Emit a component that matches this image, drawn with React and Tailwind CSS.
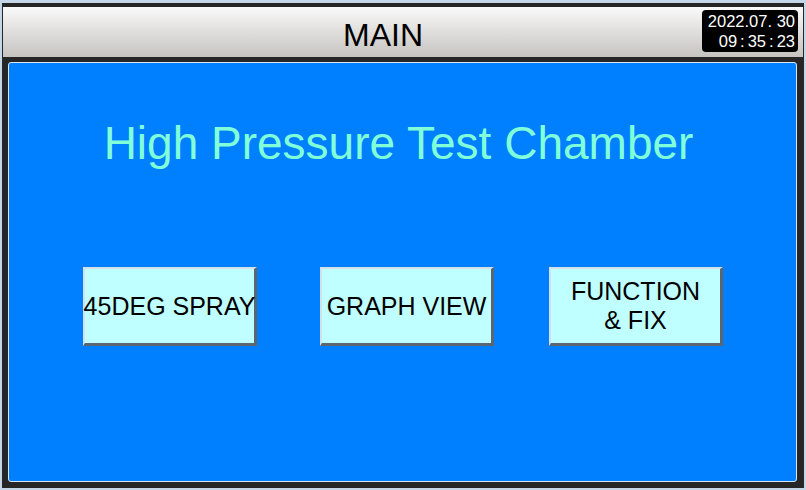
import React from "react"

const btnClass =
  "w-[174px] h-[79px] bg-[#c0ffff] border-t-2 border-l-2 border-b-[3px] border-r-[3px] border-t-[#d6e0e8] border-l-[#d6e0e8] border-b-[#5c6670] border-r-[#5c6670] flex flex-col items-center justify-center text-[25px] leading-[29px] text-black whitespace-nowrap"

export default function App() {
  return (
    <div
      className="w-[806px] h-[490px] bg-[#c5d6e8] pt-[3px] px-[2px] pb-[2px]"
      style={{ fontFamily: '"Liberation Sans", Arial, sans-serif' }}
    >
      <div className="h-full bg-[#262626] flex flex-col pt-[4px] px-[1px]">
        <div className="relative h-[50px] bg-gradient-to-b from-[#fafafa] to-[#c6c3c0] flex items-center justify-center pr-[40px]">
          <span className="text-[32px] text-black leading-none mt-[5px]">MAIN</span>
          <div className="absolute right-[5px] top-[3px] w-[96px] h-[42px] bg-black rounded-[4px] flex flex-col items-end justify-center pr-[3px] text-white text-[16.5px] leading-[20px]">
            <span>2022.07. 30</span>
            <span>
              09<span className="mx-[3px]">:</span>35<span className="mx-[3px]">:</span>23
            </span>
          </div>
        </div>
        <div className="mt-[5px] mb-[6px] ml-[5px] mr-[6px] flex-1 bg-[#0080ff] border border-[#d8e8f8] rounded-[3px] flex flex-col">
          <h1 className="mt-[54px] text-center text-[46px] leading-[52px] text-[#80ffd8] pr-[8px]">
            High Pressure Test Chamber
          </h1>
          <div className="mt-[98px] flex pl-[74px]">
            <div className={btnClass}>45DEG SPRAY</div>
            <div className={btnClass + " ml-[63px]"}>GRAPH VIEW</div>
            <div className={btnClass + " ml-[55px]"}>
              <span>FUNCTION</span>
              <span>&amp; FIX</span>
            </div>
          </div>
        </div>
      </div>
    </div>
  )
}
